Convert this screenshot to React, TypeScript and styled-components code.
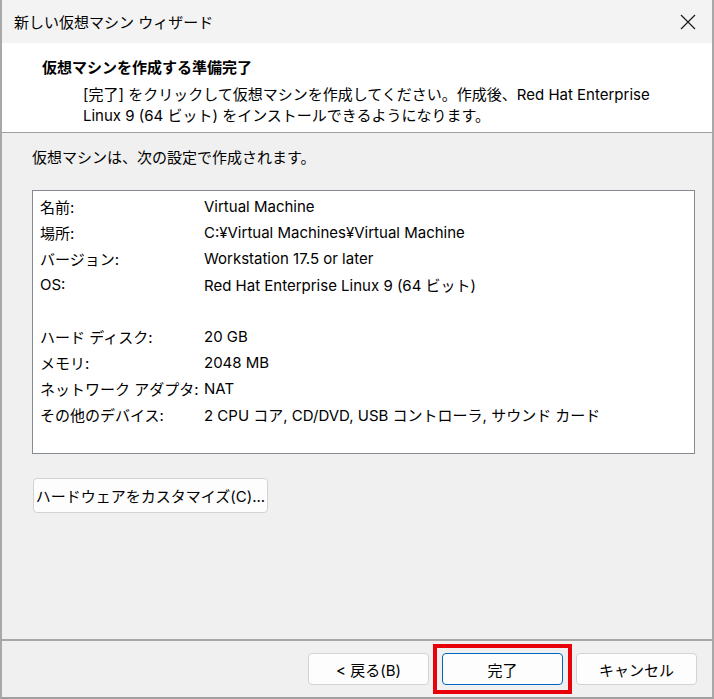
import React from 'react';
import styled, { createGlobalStyle } from 'styled-components';

const GlobalStyle = createGlobalStyle`
    html, body {
        margin: 0;
        padding: 0;
        background: #ffffff;
    }
    body {
        font-family: Inter, "Noto Sans CJK JP", sans-serif;
        color: #000;
    }
`;

const Window = styled.div`
    width: 714px;
    height: 699px;
    box-sizing: border-box;
    border-left: 2px solid #a8a8a8;
    border-right: 2px solid #a8a8a8;
    border-bottom: 2px solid #a0a0a0;
    display: flex;
    flex-direction: column;
    background: #f0f0f0;
`;

const TitleBar = styled.div`
    height: 43px;
    flex-shrink: 0;
    display: flex;
    align-items: center;
    justify-content: space-between;
    padding: 0 14px 0 12px;
    background: #f3f3f3;
    font-size: 15px;
`;

const CloseButton = styled.div`
    width: 20px;
    height: 20px;
    display: flex;
    align-items: center;
    justify-content: center;
`;

const Header = styled.div`
    height: 90px;
    flex-shrink: 0;
    box-sizing: border-box;
    background: #ffffff;
    border-bottom: 1px solid #a0a0a0;
    padding: 14px 0 0 40px;
`;

const Heading = styled.div`
    font-size: 15px;
    font-weight: bold;
    line-height: 22px;
`;

const Description = styled.div`
    margin: 5px 0 0 41px;
    font-size: 15px;
    line-height: 21px;
`;

const Body = styled.div`
    flex: 1;
    padding: 14px 17px 0 30px;
    display: flex;
    flex-direction: column;
    align-items: flex-start;
`;

const Intro = styled.div`
    font-size: 15px;
    line-height: 22px;
`;

const ListBox = styled.div`
    margin-top: 21px;
    width: 663px;
    height: 264px;
    box-sizing: border-box;
    border: 1px solid #868a91;
    background: #ffffff;
    padding: 2px 0 0 7px;
`;

const Row = styled.div`
    display: flex;
    height: 26px;
    align-items: center;
    font-size: 15px;
`;

const Label = styled.div`
    width: 164px;
    flex-shrink: 0;
`;

const Value = styled.div`
    white-space: nowrap;
`;

const Button = styled.button<{ $primary?: boolean; $width?: number }>`
    font-family: inherit;
    font-size: 15px;
    color: #000;
    height: 32px;
    width: ${({ $width }) => ($width ? `${$width}px` : '121px')};
    box-sizing: border-box;
    border-radius: 4px;
    background: #fdfdfd;
    border: 1px solid ${({ $primary }) => ($primary ? '#0067c0' : '#d3d3d3')};
    padding: 0;
    display: flex;
    align-items: center;
    justify-content: center;
`;

const CustomizeButton = styled(Button)`
    margin: 24px 0 0 1px;
    height: 35px;
`;

const Footer = styled.div`
    height: 58px;
    flex-shrink: 0;
    box-sizing: border-box;
    border-top: 2px solid #a6a6a6;
    display: flex;
    justify-content: flex-end;
    align-items: flex-start;
    gap: 13px;
    padding: 12px 15px 0 0;
`;

const Highlight = styled.div`
    position: relative;
    &::after {
        content: '';
        position: absolute;
        left: -9px;
        top: -9px;
        right: -9px;
        bottom: -9px;
        border: 4px solid #e8000b;
        pointer-events: none;
    }
`;

const rows = [
    { label: '名前:', value: 'Virtual Machine' },
    { label: '場所:', value: 'C:¥Virtual Machines¥Virtual Machine' },
    { label: 'バージョン:', value: 'Workstation 17.5 or later' },
    { label: 'OS:', value: 'Red Hat Enterprise Linux 9 (64 ビット)' },
    null,
    { label: 'ハード ディスク:', value: '20 GB' },
    { label: 'メモリ:', value: '2048 MB' },
    { label: 'ネットワーク アダプタ:', value: 'NAT' },
    { label: 'その他のデバイス:', value: '2 CPU コア, CD/DVD, USB コントローラ, サウンド カード' },
];

const App: React.FC = () => {
    return (
        <>
            <GlobalStyle />
            <Window>
                <TitleBar>
                    <span>新しい仮想マシン ウィザード</span>
                    <CloseButton>
                        <svg width="16" height="16" viewBox="0 0 16 16">
                            <path d="M1 1 L15 15 M15 1 L1 15" stroke="#1a1a1a" strokeWidth="1.2" fill="none" />
                        </svg>
                    </CloseButton>
                </TitleBar>
                <Header>
                    <Heading>仮想マシンを作成する準備完了</Heading>
                    <Description>
                        [完了] をクリックして仮想マシンを作成してください。作成後、Red Hat Enterprise
                        <br />
                        Linux 9 (64 ビット) をインストールできるようになります。
                    </Description>
                </Header>
                <Body>
                    <Intro>仮想マシンは、次の設定で作成されます。</Intro>
                    <ListBox>
                        {rows.map((row, index) =>
                            row ? (
                                <Row key={index}>
                                    <Label>{row.label}</Label>
                                    <Value>{row.value}</Value>
                                </Row>
                            ) : (
                                <Row key={index} />
                            )
                        )}
                    </ListBox>
                    <CustomizeButton $width={235}>ハードウェアをカスタマイズ(C)...</CustomizeButton>
                </Body>
                <Footer>
                    <Button>&lt; 戻る(B)</Button>
                    <Highlight>
                        <Button $primary>完了</Button>
                    </Highlight>
                    <Button>キャンセル</Button>
                </Footer>
            </Window>
        </>
    );
};

export default App;
